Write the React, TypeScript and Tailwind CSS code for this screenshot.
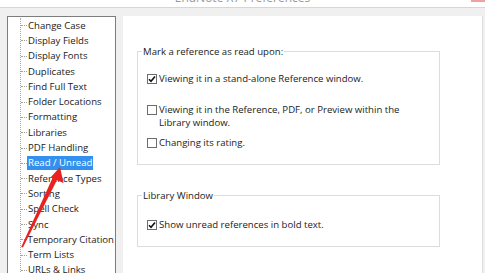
import React from "react";

const FONT = { fontFamily: '"Open Sans", "Noto Sans", sans-serif' };

const items = [
  "Change Case",
  "Display Fields",
  "Display Fonts",
  "Duplicates",
  "Find Full Text",
  "Folder Locations",
  "Formatting",
  "Libraries",
  "PDF Handling",
  "Read / Unread",
  "Reference Types",
  "Sorting",
  "Spell Check",
  "Sync",
  "Temporary Citation",
  "Term Lists",
  "URLs & Links",
];

function Check({ checked }: { checked: boolean }) {
  return (
    <span className="mt-[2px] flex h-[10px] w-[10px] shrink-0 items-center justify-center border border-[#6d6d6d] bg-white">
      {checked && (
        <svg width="8" height="8" viewBox="0 0 8 8">
          <path d="M1 4.2 L3 6.3 L7 1.4" fill="none" stroke="#111" strokeWidth="1.6" />
        </svg>
      )}
    </span>
  );
}

function Row({ checked, children, className }: { checked: boolean; children: React.ReactNode; className?: string }) {
  return (
    <div className={"flex items-start gap-[2px] " + (className ?? "")}>
      <Check checked={checked} />
      <div className="leading-[13px] text-[#222]">{children}</div>
    </div>
  );
}

export default function App() {
  return (
    <div
      className="relative flex h-[273px] w-[485px] flex-col overflow-hidden bg-[#f0f0f0] text-[9.6px]"
      style={FONT}
    >
      {/* title bar */}
      <div className="flex h-[8px] shrink-0 overflow-hidden border-b border-[#d6d6d6] bg-white">
        <div className="flex-1" />
        <div className="-mt-[9px] text-[12px] leading-[14px] text-[#999]">EndNote X7 Preferences</div>
        <div className="flex flex-1 justify-end">
          <div className="h-[2px] w-[14px] bg-[#f1a0a0]" />
        </div>
      </div>

      <div className="flex flex-1 gap-[7px] pl-[7px] pr-[2px] pt-[8px]">
        {/* tree */}
        <div className="w-[109px] shrink-0 border border-[#7d7d7d] bg-white pt-[1px]">
          <div className="ml-[12px] border-l border-dotted border-[#a8a8a8]">
            {items.map((it) => {
              const sel = it === "Read / Unread";
              return (
                <div key={it} className="flex h-[15.3px] items-center">
                  <span className="h-0 w-[6px] border-t border-dotted border-[#a0a0a0]" />
                  <span
                    className={
                      "whitespace-nowrap px-px leading-[14px] " +
                      (sel ? "bg-[#3390ee] text-white" : "text-[#1a1a1a]")
                    }
                  >
                    {it}
                  </span>
                </div>
              );
            })}
          </div>
        </div>

        {/* right panel */}
        <div className="flex-1 border-r border-[#dedede] bg-white pl-[14px] pt-[29px]">
          <fieldset className="h-[120px] w-[303px] border border-[#dcdcdc]">
            <legend className="ml-[4px] px-px leading-[13px] text-[#222]">Mark a reference as read upon:</legend>
            <div className="pl-[9px]">
              <Row checked className="mt-[14px]">
                Viewing it in a stand-alone Reference window.
              </Row>
              <Row checked={false} className="mt-[18px]">
                Viewing it in the Reference, PDF, or Preview within the
                <br />
                Library window.
              </Row>
              <Row checked={false} className="mt-[7px]">
                Changing its rating.
              </Row>
            </div>
          </fieldset>

          <fieldset className="mt-[24px] h-[58px] w-[303px] border border-[#dcdcdc]">
            <legend className="ml-[4px] px-px leading-[13px] text-[#222]">Library Window</legend>
            <div className="pl-[9px]">
              <Row checked className="mt-[16px]">
                Show unread references in bold text.
              </Row>
            </div>
          </fieldset>
        </div>
      </div>

      {/* red annotation arrow */}
      <svg
        className="pointer-events-none absolute left-0 top-0"
        width="485"
        height="273"
        viewBox="0 0 485 273"
      >
        <polygon points="21.2,247 22.9,247.5 57.9,178.2 53.4,176" fill="#e8231f" />
        <polygon points="60,167 50.5,177.5 63.5,183" fill="#e8231f" />
      </svg>
    </div>
  );
}
